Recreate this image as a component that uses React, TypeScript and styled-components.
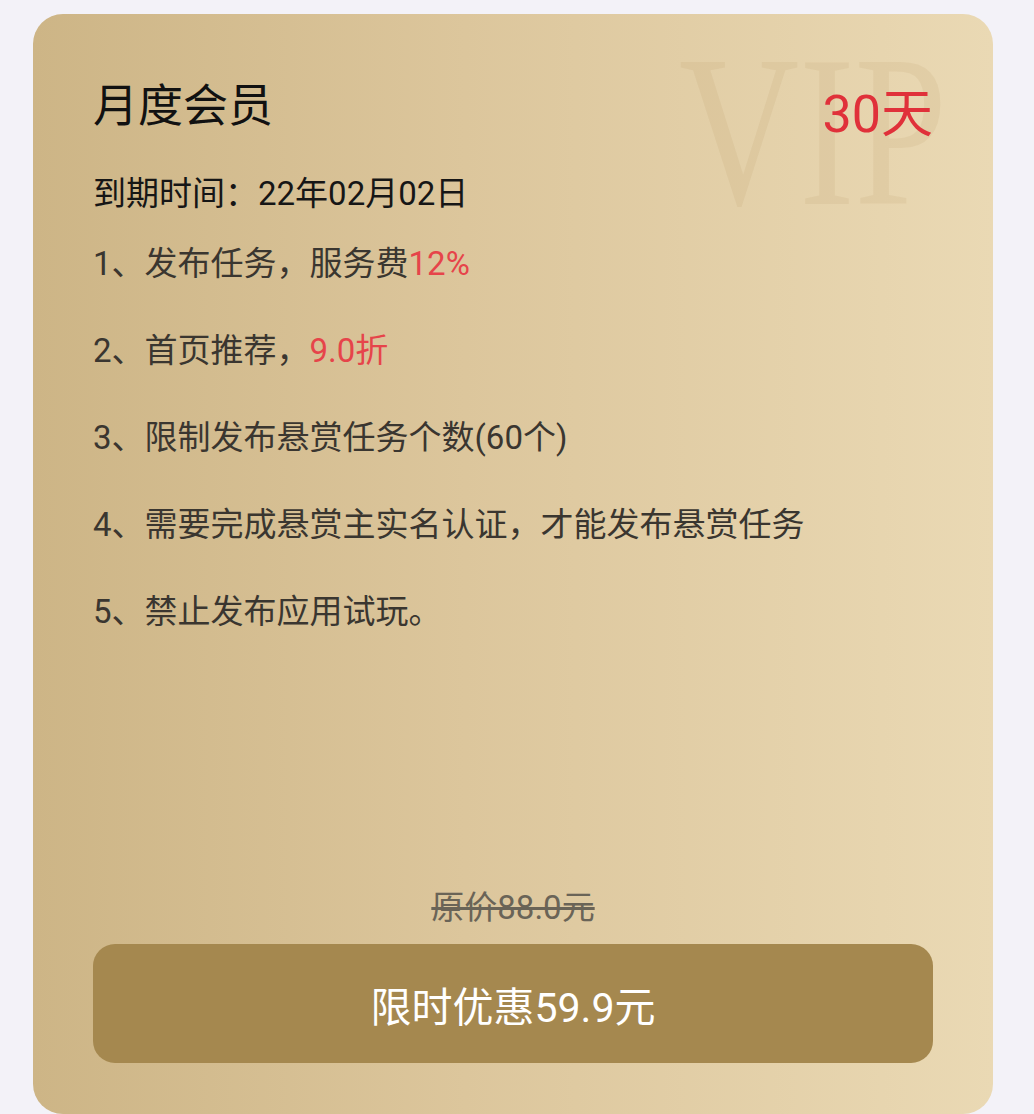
import React from "react";
import styled, { createGlobalStyle } from "styled-components";

const GlobalStyle = createGlobalStyle`
  html, body {
    margin: 0;
    padding: 0;
    background: #f3f2f8;
    overflow: hidden;
  }
  body {
    font-family: Roboto, "Noto Sans CJK SC", sans-serif;
  }
`;

const Page = styled.div`
  padding: 14px 0 0 33px;
  height: 1100px;
`;

const Card = styled.section`
  position: relative;
  box-sizing: border-box;
  width: 960px;
  height: 1100px;
  border-radius: 30px;
  overflow: hidden;
  background: linear-gradient(90deg, #cdb586 0%, #dcc69c 45%, #ead9b4 100%);
  padding: 64px 60px 51px;
  display: flex;
  flex-direction: column;
`;

const Watermark = styled.div`
  position: absolute;
  top: 10px;
  right: 46px;
  font-family: "Liberation Serif", serif;
  font-size: 216px;
  line-height: 1;
  color: rgba(175, 140, 80, 0.11);
  transform: scaleX(0.77);
  transform-origin: right top;
  pointer-events: none;
  user-select: none;
`;

const Header = styled.div`
  position: relative;
  display: flex;
  justify-content: space-between;
  align-items: flex-start;
`;

const Title = styled.h1`
  margin: 0;
  font-size: 45px;
  line-height: 58px;
  font-weight: 400;
  color: #111;
`;

const Days = styled.div`
  margin-top: 6px;
  font-size: 52px;
  line-height: 62px;
  color: #e0313a;
`;

const Expiry = styled.div`
  position: relative;
  margin-top: 26px;
  margin-bottom: 4px;
  font-size: 33px;
  line-height: 44px;
  color: #161616;
`;

const List = styled.ol`
  position: relative;
  list-style: none;
  margin: 0;
  padding: 0;
`;

const Item = styled.li`
  font-size: 33px;
  line-height: 87px;
  color: #3a3630;
`;

const Red = styled.span`
  color: #e6444a;
`;

const Bottom = styled.div`
  margin-top: auto;
  position: relative;
  display: flex;
  flex-direction: column;
  align-items: center;
`;

const OldPrice = styled.div`
  font-size: 33px;
  line-height: 44px;
  color: #6a6457;
  text-decoration: line-through;
`;

const BuyButton = styled.button`
  margin-top: 14px;
  width: 100%;
  height: 119px;
  border: none;
  border-radius: 22px;
  background: #a5884f;
  color: #fff;
  font-family: Roboto, "Noto Sans CJK SC", sans-serif;
  font-size: 41px;
  cursor: pointer;
`;

export default function App() {
  return (
    <>
      <GlobalStyle />
      <Page>
        <Card>
          <Watermark aria-hidden="true">VIP</Watermark>
          <Header>
            <Title>月度会员</Title>
            <Days>30天</Days>
          </Header>
          <Expiry>到期时间：22年02月02日</Expiry>
          <List>
            <Item>
              1、发布任务，服务费<Red>12%</Red>
            </Item>
            <Item>
              2、首页推荐，<Red>9.0折</Red>
            </Item>
            <Item>3、限制发布悬赏任务个数(60个)</Item>
            <Item>4、需要完成悬赏主实名认证，才能发布悬赏任务</Item>
            <Item>5、禁止发布应用试玩。</Item>
          </List>
          <Bottom>
            <OldPrice>原价88.0元</OldPrice>
            <BuyButton>限时优惠59.9元</BuyButton>
          </Bottom>
        </Card>
      </Page>
    </>
  );
}
